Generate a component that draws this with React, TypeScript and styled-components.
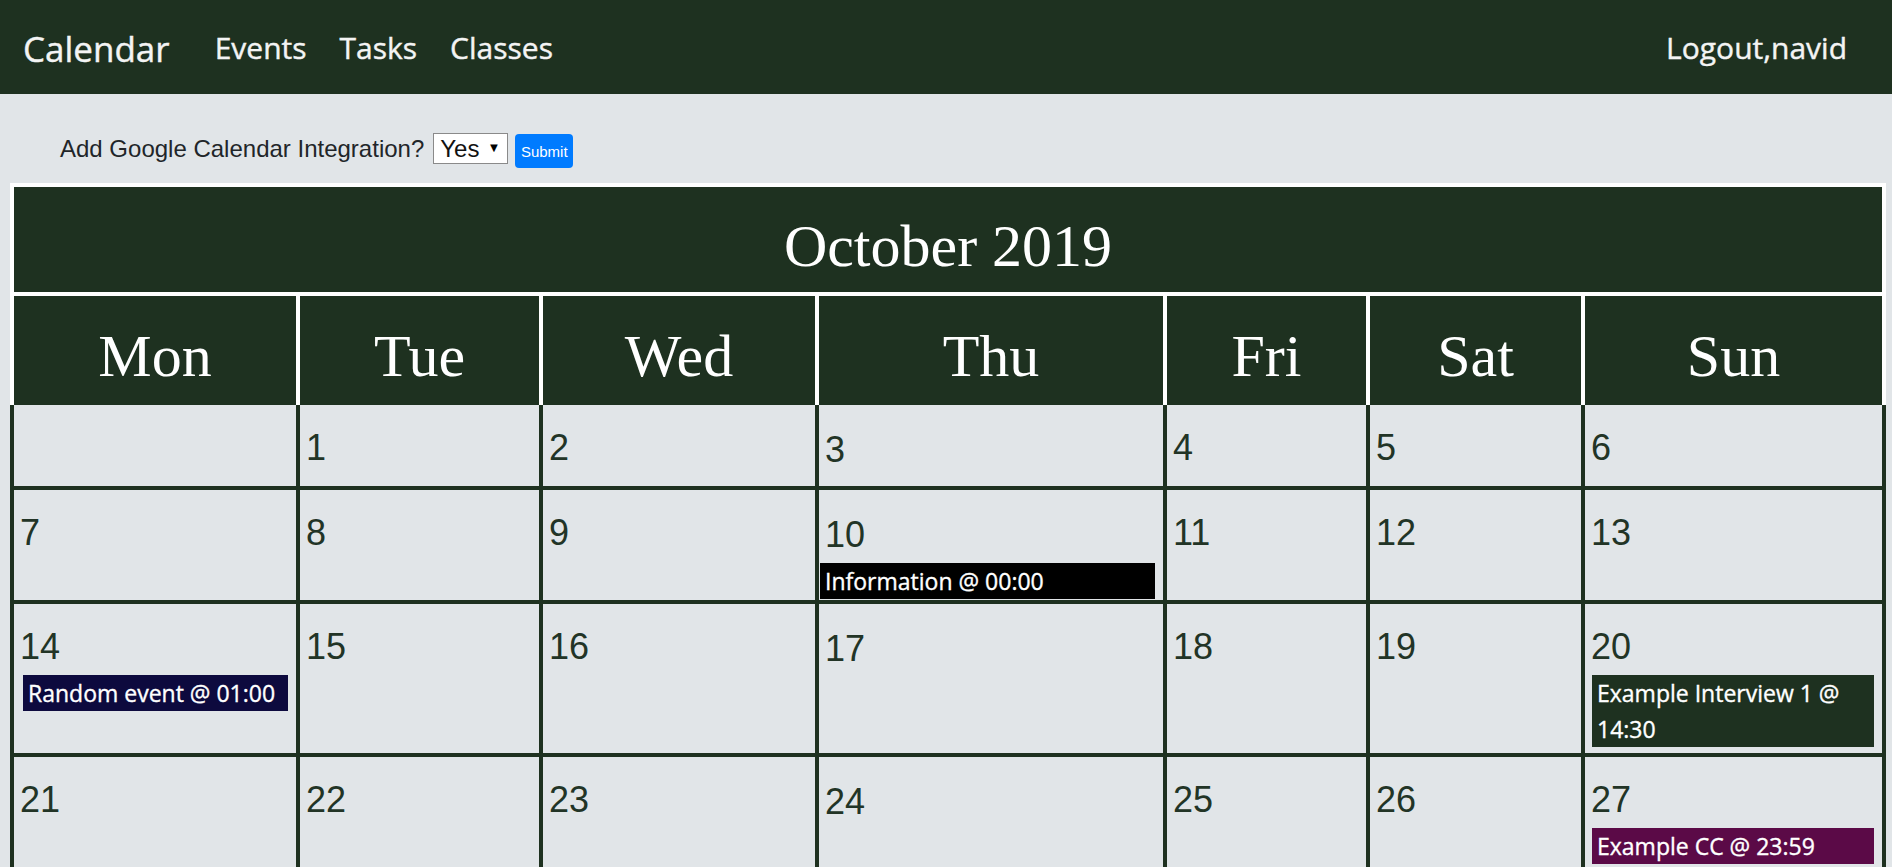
import React from 'react';
import styled, { createGlobalStyle } from 'styled-components';

const GlobalStyle = createGlobalStyle`
    body {
        margin: 0;
        background: #e1e5e8;
        font-family: "Liberation Sans", Arial, sans-serif;
        color: #212529;
    }
`

const StyledNav = styled.nav`
    align-items: center;
    background: #1e3120;
    display: flex;
    height: 94px;
    padding: 0 45px 0 23px;
    font-family: "Open Sans", "Noto Sans", sans-serif;
    -webkit-text-stroke: 0.4px #f4f4f4;
`

const Brand = styled.a`
    color: #f4f4f4;
    font-size: 35px;
    margin-right: 45px;
    text-decoration: none;
    margin-top: 2px;
`

const NavList = styled.ul`
    display: flex;
    flex-grow: 1;
    gap: 33px;
    list-style: none;
    margin: 0;
    padding: 0;
`

const NavLink = styled.a`
    color: #f4f4f4;
    font-size: 30px;
    text-decoration: none;
`

const FormRow = styled.form`
    align-items: flex-start;
    display: flex;
    margin: 39px 0 15px 60px;
    height: 35px;
`

const Label = styled.label`
    font-size: 24px;
    margin-top: 2px;
    margin-right: 9px;
`

const SelectWrap = styled.div`
    position: relative;
    margin-right: 7px;

    &::after {
        content: "▼";
        position: absolute;
        right: 8px;
        top: 7px;
        font-size: 13px;
        color: #000;
        pointer-events: none;
    }
`

const Select = styled.select`
    appearance: none;
    background: #fff;
    border: 1px solid #8a8a8a;
    box-sizing: border-box;
    color: #111;
    font-family: "Liberation Sans", Arial, sans-serif;
    font-size: 24px;
    height: 31px;
    padding: 0 0 0 6px;
    width: 75px;
`

const SubmitButton = styled.button`
    background: #007bff;
    border: none;
    border-radius: 4px;
    color: #fff;
    font-family: "Liberation Sans", Arial, sans-serif;
    font-size: 15px;
    height: 34px;
    margin-top: 1px;
    padding: 0 5px;
    width: 58px;
`

const columns = [282, 239, 272, 344, 199, 211, 297];
const template = columns.map((w) => `${w}px`).join(' ');

const Calendar = styled.section`
    margin-left: 10px;
    width: 1876px;
`

const Title = styled.h1`
    background: #1e3120;
    border: 4px solid #fff;
    box-sizing: border-box;
    color: #fff;
    font-family: "Liberation Serif", "Times New Roman", serif;
    font-size: 60px;
    font-weight: normal;
    height: 113px;
    line-height: 66px;
    margin: 0;
    padding-top: 26px;
    text-align: center;
`

const DayHeader = styled.div`
    background: #fff;
    column-gap: 4px;
    display: grid;
    grid-template-columns: ${template};
    padding: 0 4px;
`

const DayName = styled.div`
    background: #1e3120;
    box-sizing: border-box;
    color: #fff;
    font-family: "Liberation Serif", "Times New Roman", serif;
    font-size: 60px;
    height: 109px;
    line-height: 66px;
    padding-top: 27px;
    text-align: center;
`

const Month = styled.div`
    background: #1e3120;
    display: grid;
    gap: 4px;
    grid-template-columns: ${template};
    grid-template-rows: 81px 110px 149px 150px;
    padding: 0 4px 4px;
`

const DayCell = styled.div`
    background: #e1e5e8;
    overflow: hidden;
`

const DayNumber = styled.div<{ $drop: number }>`
    color: #223426;
    font-size: 36px;
    height: 40px;
    line-height: 40px;
    padding: ${(p) => 23 + p.$drop}px 0 0 6px;
`

const Event = styled.div<{ $color: string; $inset: number }>`
    background: ${(p) => p.$color};
    color: #fff;
    font-family: "Open Sans", "Noto Sans", sans-serif;
    font-size: 23px;
    -webkit-text-stroke: 0.35px #fff;
    line-height: 36px;
    margin: 8px 8px 0 ${(p) => p.$inset}px;
    padding: 0 5px;
`

const navLinks = ['Events', 'Tasks', 'Classes'];
const dayNames = ['Mon', 'Tue', 'Wed', 'Thu', 'Fri', 'Sat', 'Sun'];

type CalEvent = { label: string; color: string; inset: number };

const events: Record<number, CalEvent> = {
    10: { label: 'Information @ 00:00', color: '#000', inset: 1 },
    14: { label: 'Random event @ 01:00', color: '#0d0a3e', inset: 9 },
    20: { label: 'Example Interview 1 @ 14:30', color: '#1e3120', inset: 7 },
    27: { label: 'Example CC @ 23:59', color: '#5b0a47', inset: 7 },
};

const days: (number | null)[] = [null, ...Array.from({ length: 27 }, (_, i) => i + 1)];

const App: React.FC = () => {
    return (
        <>
            <GlobalStyle />
            <StyledNav>
                <Brand href="#">Calendar</Brand>
                <NavList>
                    { navLinks.map((label) => (
                        <li key={ label }>
                            <NavLink href="#">{ label }</NavLink>
                        </li>
                    )) }
                </NavList>
                <NavLink href="#">Logout,navid</NavLink>
            </StyledNav>

            <FormRow onSubmit={ (e) => e.preventDefault() }>
                <Label htmlFor="gcal">Add Google Calendar Integration?</Label>
                <SelectWrap>
                    <Select id="gcal" defaultValue="yes">
                        <option value="yes">Yes</option>
                        <option value="no">No</option>
                    </Select>
                </SelectWrap>
                <SubmitButton type="submit">Submit</SubmitButton>
            </FormRow>

            <Calendar>
                <Title>October 2019</Title>
                <DayHeader>
                    { dayNames.map((name) => <DayName key={ name }>{ name }</DayName>) }
                </DayHeader>
                <Month>
                    { days.map((day, i) => (
                        <DayCell key={ i }>
                            {/* the Thursday column sits a little lower in the original */}
                            <DayNumber $drop={ i % 7 === 3 ? 2 : 0 }>{ day ?? '' }</DayNumber>
                            { day && events[day] && (
                                <Event $color={ events[day].color } $inset={ events[day].inset }>
                                    { events[day].label }
                                </Event>
                            ) }
                        </DayCell>
                    )) }
                </Month>
            </Calendar>
        </>
    );
};

export default App;
